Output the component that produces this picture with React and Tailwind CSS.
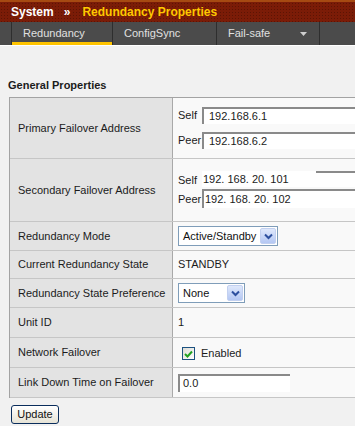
import React from 'react';

const font = { fontFamily: '"Liberation Sans", Arial, sans-serif' };

function Chevron() {
  return (
    <svg width="9" height="7" viewBox="0 0 9 7">
      <path d="M1 1.5 L4.5 5 L8 1.5" fill="none" stroke="#2c4f9e" strokeWidth="2" />
    </svg>
  );
}

function Select({ value, width }) {
  return (
    <div className={`flex items-center justify-between h-[20px] border border-[#7f9db9] bg-white pl-[4px] pr-[1px] ${width}`}>
      <span className="text-[11px] text-[#111]">{value}</span>
      <span className="flex items-center justify-center w-[16px] h-[16px] rounded-[2px] bg-gradient-to-b from-[#dfe8fb] to-[#b4c7f3] border border-[#c2d0f0]">
        <Chevron />
      </span>
    </div>
  );
}

function Row({ label, height, children }) {
  return (
    <div className={`flex border-b border-[#c6c6c6] ${height}`}>
      <div className="w-[163px] shrink-0 bg-[#e3e3e3] border-r border-[#a9a9a9] flex items-center pl-[8px] text-[11px] text-[#1b1b1b]">
        {label}
      </div>
      <div className="flex-1 bg-[#f9f9f9] pl-[5px] text-[11px] text-[#1b1b1b]">{children}</div>
    </div>
  );
}

export default function App() {
  return (
    <div className="w-[355px] h-[426px] overflow-hidden bg-[#f1f1f1]" style={font}>
      <div className="h-[22px] bg-[#7b1c07] bg-[radial-gradient(#5c1404_1px,transparent_1px)] bg-[length:3px_3px] border-t-2 border-[#a64a12] flex items-center pl-[11px] text-[12px] font-bold">
        <span className="text-white">System</span>
        <span className="text-white ml-[10px]">»</span>
        <span className="text-[#ffc800] ml-[12px]">Redundancy Properties</span>
      </div>
      <div className="h-[24px] bg-[#4b4b4b] flex pl-[11px] border-b border-white">
        <div className="w-[102px] border-l border-r border-[#2e2e2e] relative flex items-center pl-[11px] text-[11px] text-[#e0e0e0]">
          Redundancy
          <div className="absolute left-0 right-0 bottom-0 h-[3px] bg-[#ffc400]" />
        </div>
        <div className="w-[104px] border-r border-[#2e2e2e] flex items-center pl-[11px] text-[11px] text-[#e0e0e0]">
          ConfigSync
        </div>
        <div className="w-[103px] border-r border-[#2e2e2e] flex items-center justify-between pl-[11px] pr-[12px] text-[11px] text-[#e0e0e0]">
          Fail-safe
          <svg width="7" height="4" viewBox="0 0 7 4"><path d="M0 0 H7 L3.5 4 Z" fill="#cfcfcf" /></svg>
        </div>
      </div>

      <div className="pt-[33px] pl-[8px] text-[11px] font-bold text-[#1b1b1b] leading-[13px]">General Properties</div>

      <div className="ml-[9px] mt-[5px] w-[400px] border-t border-l border-[#a3a3a3]">
        <Row label="Primary Failover Address" height="h-[61px]">
          <div className="flex flex-col pt-[9px] gap-[8px]">
            <div className="flex items-center h-[17px]">
              <span className="w-[24px]">Self</span>
              <div className="flex-1 h-[17px] bg-white border-t-2 border-l-2 border-[#8a8a8a] flex items-center pl-[5px]">192.168.6.1</div>
            </div>
            <div className="flex items-center h-[17px]">
              <span className="w-[24px]">Peer</span>
              <div className="flex-1 h-[17px] bg-white border-t-2 border-l-2 border-[#8a8a8a] flex items-center pl-[5px]">192.168.6.2</div>
            </div>
          </div>
        </Row>
        <Row label="Secondary Failover Address" height="h-[63px]">
          <div className="flex flex-col pt-[12px] gap-[2px]">
            <div className="flex items-center h-[16px]">
              <span className="w-[24px] pt-[2px]">Self</span>
              <div className="relative flex-1 h-[16px] bg-white flex items-center pl-[1px]">
                192. 168. 20. 101
                <div className="absolute top-0 left-[114px] right-0 h-[2px] bg-[#8a8a8a]" />
              </div>
            </div>
            <div className="flex items-center h-[19px]">
              <span className="w-[24px] pt-[2px]">Peer</span>
              <div className="flex-1 h-[19px] bg-white border-t-2 border-l-2 border-[#8a8a8a] flex items-center pl-[1px]">192. 168. 20. 102</div>
            </div>
          </div>
        </Row>
        <Row label="Redundancy Mode" height="h-[29px]">
          <div className="h-full flex items-center">
            <Select value="Active/Standby" width="w-[100px]" />
          </div>
        </Row>
        <Row label="Current Redundancy State" height="h-[28px]">
          <div className="h-full flex items-center">STANDBY</div>
        </Row>
        <Row label="Redundancy State Preference" height="h-[29px]">
          <div className="h-full flex items-center">
            <Select value="None" width="w-[67px]" />
          </div>
        </Row>
        <Row label="Unit ID" height="h-[30px]">
          <div className="h-full flex items-center">1</div>
        </Row>
        <Row label="Network Failover" height="h-[30px]">
          <div className="h-full flex items-center pl-[4px] gap-[6px] pt-[2px]">
            <span className="w-[13px] h-[13px] border border-[#1c5180] bg-gradient-to-br from-[#dcdcd6] to-white flex items-center justify-center">
              <svg width="9" height="8" viewBox="0 0 9 8">
                <path d="M1 4 L3.5 6.5 L8 1.5" fill="none" stroke="#21a121" strokeWidth="2" />
              </svg>
            </span>
            <span>Enabled</span>
          </div>
        </Row>
        <Row label="Link Down Time on Failover" height="h-[30px]">
          <div className="h-full flex items-center">
            <div className="w-[112px] h-[18px] bg-white border-t-2 border-l-2 border-[#8a8a8a] flex items-center pl-[3px]">0.0</div>
          </div>
        </Row>
      </div>

      <div className="pl-[11px] pt-[7px] flex">
        <div className="w-[48px] h-[19px] rounded-[3px] border border-[#0a2d5c] bg-gradient-to-b from-white to-[#e6e3d6] text-[11px] text-[#111] flex items-center justify-center">
          Update
        </div>
      </div>
    </div>
  );
}
